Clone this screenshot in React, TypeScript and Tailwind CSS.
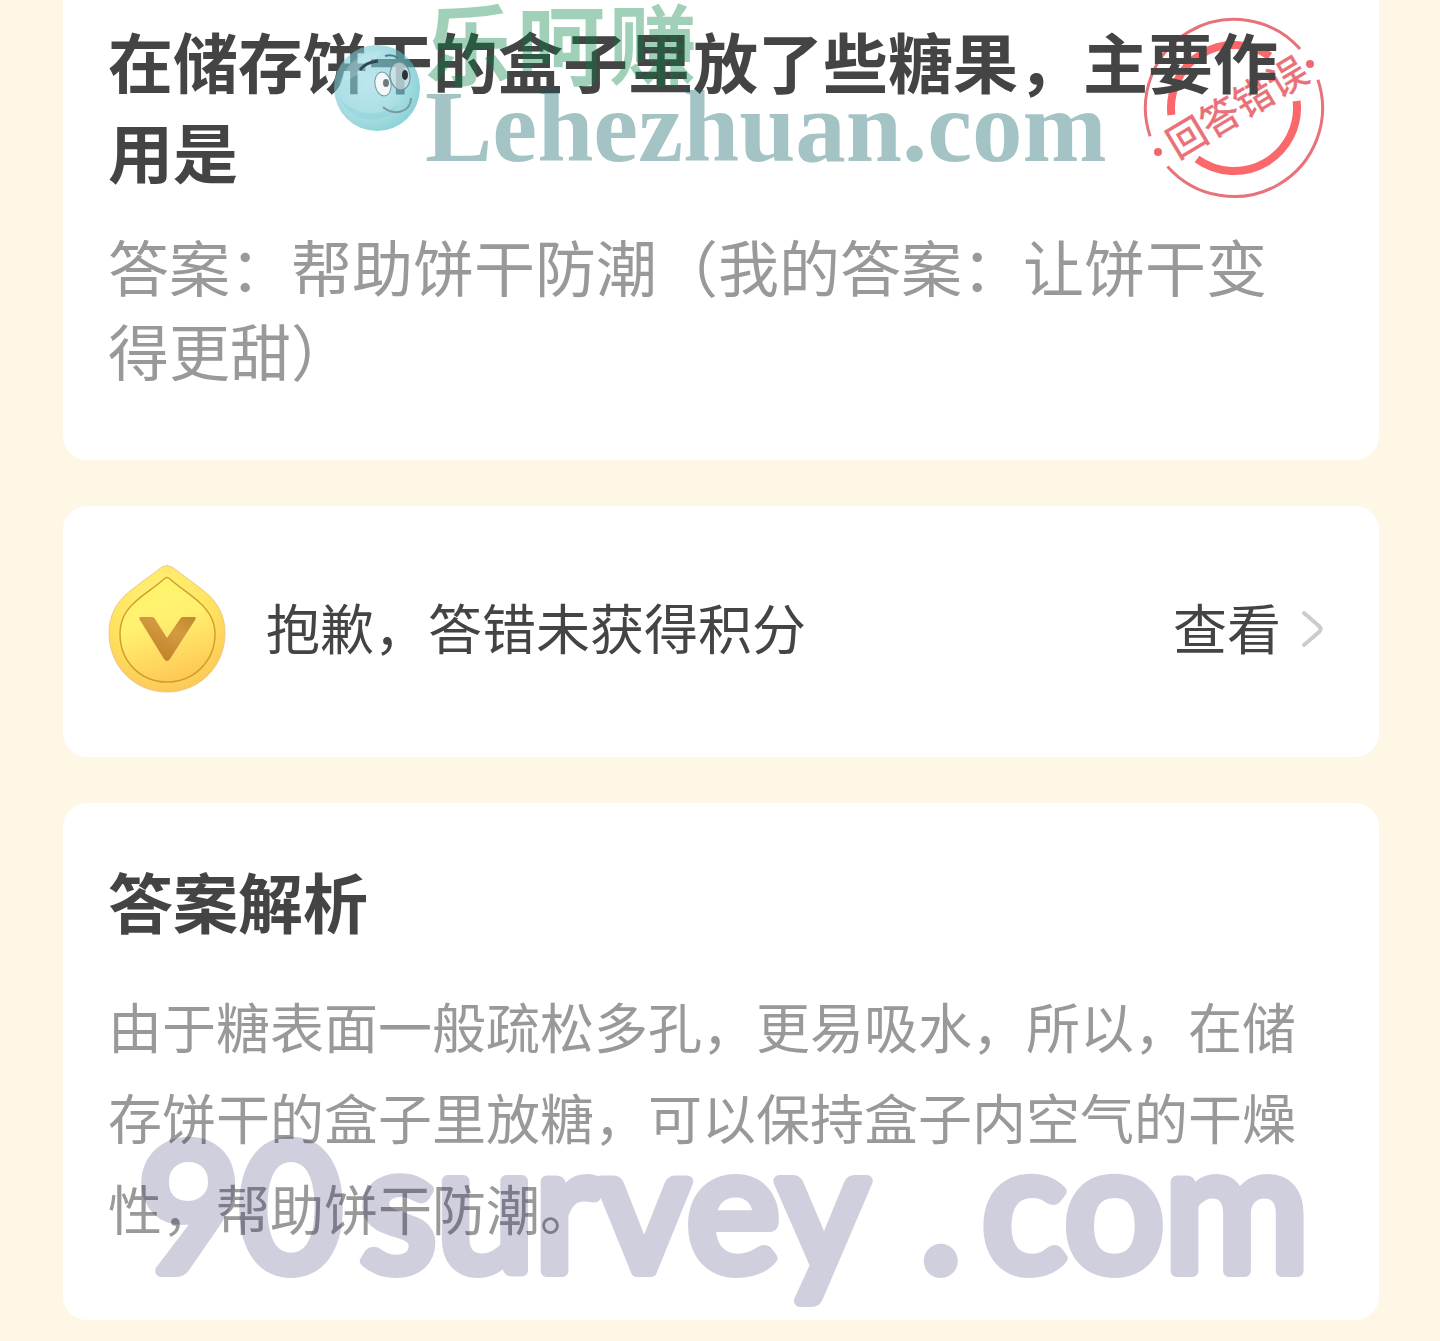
import React from 'react';

function WrongStamp() {
  return (
    <svg
      viewBox="0 0 188 188"
      className="absolute top-[14px] right-[51px] w-[188px] h-[188px]"
      role="img"
      aria-label="回答错误"
      fill="none"
    >
      <g stroke="#e8727a" strokeWidth="3">
        <path d="M10.1 122.2A88.5 88.5 0 0 1 160.1 35.1" />
        <path d="M177.9 65.8A88.5 88.5 0 0 1 27.5 152.4" />
      </g>
      <g stroke="#fb686c" strokeWidth="8">
        <path d="M31.4 101A63 63 0 0 1 129.9 42.2" />
        <path d="M156.6 87A63 63 0 0 1 57 145" />
      </g>
      <circle cx="170" cy="50" r="4" fill="#ee6a70" />
      <circle cx="18" cy="138" r="4" fill="#ee6a70" />
      <text
        x="97"
        y="109"
        textAnchor="middle"
        transform="rotate(-31 94 94)"
        fill="#ea6f76"
        stroke="#ea6f76"
        strokeWidth="0.5"
        className="font-['Noto_Sans_CJK_SC',sans-serif] text-[39px]"
      >
        回答错误
      </text>
    </svg>
  );
}

function CoinIcon() {
  return (
    <svg viewBox="0 0 118 128" className="w-[118px] h-[128px] shrink-0" aria-hidden="true">
      <defs>
        <radialGradient id="coin-rim" cx="0.45" cy="0.3" r="0.75">
          <stop offset="0" stopColor="#fff57a" />
          <stop offset="0.6" stopColor="#ffe25f" />
          <stop offset="1" stopColor="#fcc458" />
        </radialGradient>
        <linearGradient id="coin-face" x1="0.35" y1="0" x2="0.65" y2="1">
          <stop offset="0" stopColor="#fff46c" />
          <stop offset="0.4" stopColor="#fff170" />
          <stop offset="1" stopColor="#ffc653" />
        </linearGradient>
        <linearGradient id="coin-mark" x1="1" y1="0" x2="0.3" y2="1">
          <stop offset="0" stopColor="#bd8a2c" />
          <stop offset="0.4" stopColor="#d49a42" />
          <stop offset="1" stopColor="#bd8126" />
        </linearGradient>
      </defs>
      <path
        d="M54 2Q59 -1 64 2C76 11 86 18 96 26C110 37 117 51 117 68C117 101 92 127 59 127C26 127 1 101 1 68C1 51 8 37 22 26C32 18 42 11 54 2Z"
        fill="url(#coin-rim)"
        stroke="#eec98a"
        strokeWidth="1"
      />
      <path
        d="M56 14Q59 11 62 14C72 23 84 30 92 38C102 47 107 57 107 69C107 96 86 117 59 117C32 117 12 96 12 69C12 57 16 47 26 38C34 30 46 23 56 14Z"
        fill="url(#coin-face)"
        stroke="#d1a02c"
        strokeWidth="1.5"
      />
      <path
        d="M33 52H44Q46 52 47 54L59 73L72 54Q73 52 75 52H86Q89 52 87 55L62 94Q59 98 56 94L32 55Q30 52 33 52Z"
        fill="url(#coin-mark)"
      />
    </svg>
  );
}

function Mascot() {
  return (
    <svg viewBox="0 0 88 88" className="w-[88px] h-[88px] shrink-0" aria-hidden="true" fill="none">
      <defs>
        <radialGradient id="mascot-ball" cx="0.4" cy="0.42" r="0.6">
          <stop offset="0" stopColor="#92d6e2" />
          <stop offset="0.65" stopColor="#74cad4" />
          <stop offset="1" stopColor="#43b6bd" />
        </radialGradient>
      </defs>
      <circle cx="44" cy="44" r="43" fill="url(#mascot-ball)" opacity="0.6" />
      <path d="M6 40C12 20 28 8 48 7C38 22 22 34 6 40Z" fill="#d4f1f6" opacity="0.25" />
      <path d="M5 52C20 72 46 74 66 60C58 80 20 84 5 52Z" fill="#63bdc9" opacity="0.2" />
      <ellipse cx="50" cy="40" rx="8" ry="12" fill="#f4f8f9" stroke="#6e9aa1" transform="rotate(-10 50 40)" />
      <ellipse cx="67" cy="32" rx="10" ry="14" fill="#dce3e6" fillOpacity="0.6" stroke="#6e8f98" transform="rotate(-8 67 32)" />
      <ellipse cx="53" cy="39" rx="3" ry="4" fill="#6d7a7f" />
      <ellipse cx="72" cy="31" rx="3" ry="5" fill="#2c3236" />
      <path d="M27 26Q33 18 45 17" stroke="#2d4850" strokeWidth="3" />
      <path d="M52 12Q59 10 65 14" stroke="#4b7d87" strokeWidth="2" />
      <path d="M50 63C60 72 78 69 78 54" stroke="#7a9aa0" strokeWidth="2" />
    </svg>
  );
}

function SiteWatermark() {
  return (
    <div
      className="absolute top-0 left-[333px] flex pointer-events-none select-none whitespace-nowrap"
      aria-hidden="true"
    >
      <div className="pt-[44px]">
        <Mascot />
      </div>
      <div className="pl-1">
        <div className="h-[87px] flex gap-1 text-[88px] leading-[80px] font-bold font-['Noto_Sans_CJK_SC',sans-serif] text-[#008042]/37">
          <span>乐</span>
          <span>呵</span>
          <span>赚</span>
        </div>
        <div className="text-[101px] leading-[80px] font-bold font-['Liberation_Serif',serif] text-[#00595c]/36">
          Lehezhuan.com
        </div>
      </div>
    </div>
  );
}

function SurveyWatermark() {
  return (
    <svg
      viewBox="0 0 1200 220"
      className="absolute left-[130px] bottom-0 w-[1200px] h-[220px] pointer-events-none select-none opacity-[0.185]"
      aria-hidden="true"
    >
      <text
        y="150"
        fill="#00004d"
        stroke="#00004d"
        strokeWidth="12"
        strokeLinejoin="round"
        className="font-['Lato',sans-serif] text-[176px]"
      >
        <tspan x="8">90</tspan>
        <tspan x="230">survey</tspan>
        <tspan x="790">.</tspan>
        <tspan x="852">com</tspan>
      </text>
    </svg>
  );
}

export default function App() {
  return (
    <main className="relative overflow-hidden bg-[#fff7e6] pl-[63px] pr-[61px] pb-[21px] flex flex-col gap-[46px] font-['Noto_Sans_CJK_SC',sans-serif] text-[#444444]">
      {/* Question */}
      <section className="relative bg-white rounded-b-3xl pt-[15px] pb-[68px] pl-[45px] pr-[56px]">
        <WrongStamp />
        <h1 className="relative text-[65px] leading-[90px] font-bold">
          在储存饼干的盒子里放了些糖果，主要作用是
        </h1>
        <p className="relative mt-[29px] text-[61px] leading-[84px] text-[#999999]">
          答案：帮助饼干防潮（我的答案：让饼干变得更甜）
        </p>
      </section>

      {/* Points */}
      <section className="bg-white rounded-3xl pt-[59px] pb-[64px] pl-[45px] pr-[56px] flex items-center">
        <CoinIcon />
        <p className="ml-[40px] pb-1 flex-1 text-[54px] leading-[84px]">抱歉，答错未获得积分</p>
        <button type="button" className="flex items-center gap-[18px] text-[54px] leading-[84px]">
          <span className="pb-1">查看</span>
          <svg viewBox="0 0 24 40" className="w-[24px] h-[40px]" fill="none" aria-hidden="true">
            <path
              d="M5 4L20 17Q23 20 20 23L5 36"
              stroke="#cccccc"
              strokeWidth="4"
              strokeLinecap="round"
            />
          </svg>
        </button>
      </section>

      {/* Explanation */}
      <section className="bg-white rounded-3xl pt-[52px] pb-[67px] pl-[45px] pr-[56px]">
        <h2 className="text-[65px] leading-[90px] font-bold">答案解析</h2>
        <p className="mt-[35px] text-[54px] leading-[91px] text-[#999999]">
          由于糖表面一般疏松多孔，更易吸水，所以，在储存饼干的盒子里放糖，可以保持盒子内空气的干燥性，帮助饼干防潮。
        </p>
      </section>

      <SiteWatermark />
      <SurveyWatermark />
    </main>
  );
}
